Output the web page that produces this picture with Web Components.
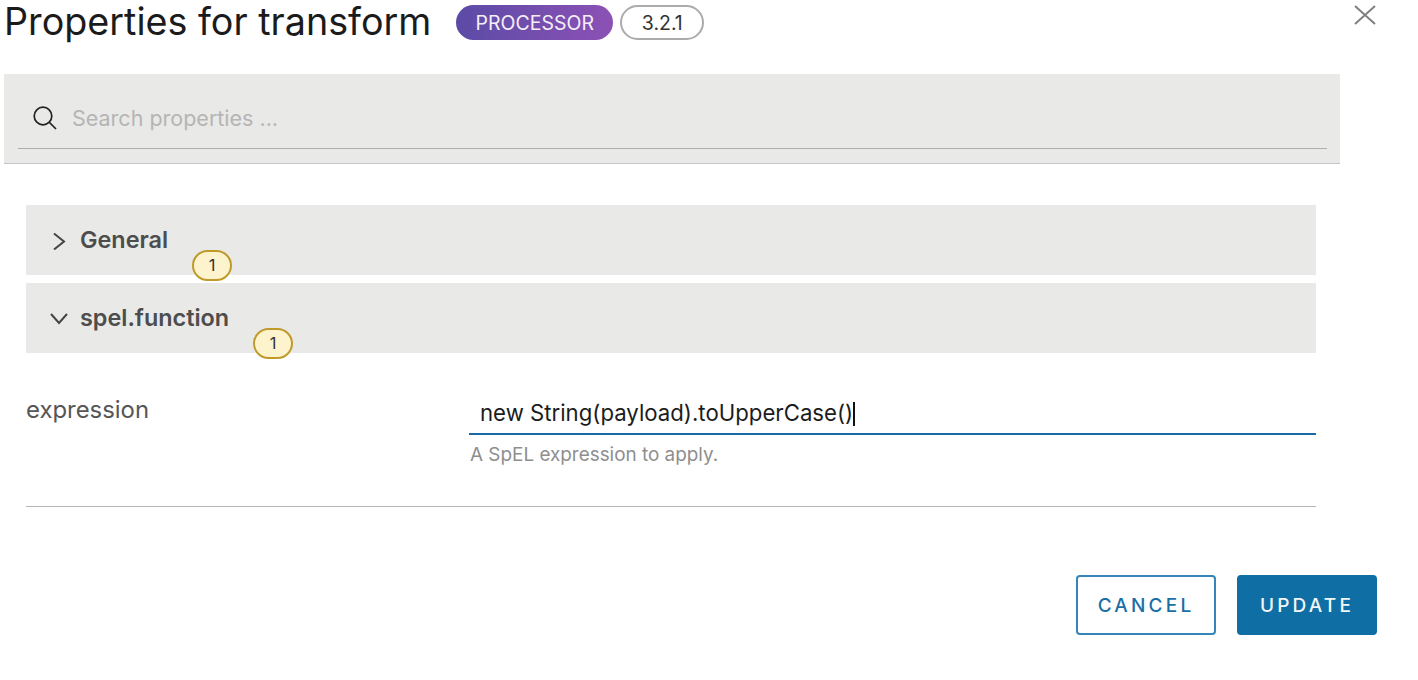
<!DOCTYPE html>
<html lang="en">
<head>
<meta charset="utf-8">
<title>Properties for transform</title>
<style>
  html, body { margin: 0; background: #fff; }
  body { font-family: "Inter", "Liberation Sans", sans-serif; overflow: hidden; }
</style>
</head>
<body>
<props-dialog>
  <dialog-header slot="header" name="Properties for transform" kind="PROCESSOR" version="3.2.1"></dialog-header>
  <search-bar slot="search" placeholder="Search properties ..."></search-bar>
  <prop-group label="General" count="1"></prop-group>
  <prop-group label="spel.function" count="1" open>
    <prop-field label="expression" value="new String(payload).toUpperCase()" hint="A SpEL expression to apply."></prop-field>
  </prop-group>
  <dialog-actions slot="actions"></dialog-actions>
</props-dialog>

<script>
class PropsDialog extends HTMLElement {
  constructor() {
    super();
    this.attachShadow({ mode: 'open' });
    this.shadowRoot.innerHTML = `
      <style>
        :host { display: block; width: 1418px; height: 680px; position: relative; box-sizing: border-box; padding: 0 0 0 4px; }
        .close { position: absolute; left: 1353px; top: 4px; width: 24px; height: 22px; display: block; }
        .groups { width: 1290px; margin: 41px 0 0 22px; display: flex; flex-direction: column; gap: 8px; }
        .end { width: 1290px; height: 1px; margin: 0 0 0 22px; background: #b4b4b4; }
      </style>
      <slot name="header"></slot>
      <svg class="close" viewBox="0 0 24 22" fill="none" stroke="#808080" stroke-width="2"><path d="M2 2 L22 20 M22 2 L2 20"/></svg>
      <slot name="search"></slot>
      <div class="groups"><slot></slot></div>
      <div class="end"></div>
      <slot name="actions"></slot>
    `;
  }
}

class DialogHeader extends HTMLElement {
  constructor() {
    super();
    this.attachShadow({ mode: 'open' });
    this.shadowRoot.innerHTML = `
      <style>
        :host { display: flex; align-items: center; height: 74px; box-sizing: border-box; padding-bottom: 29px; }
        h1 { margin: -3px 0 0; font: 400 37.7px/45px "Inter", "Liberation Sans", sans-serif; color: #1b1b1b; white-space: nowrap; }
        .kind, .ver { display: flex; align-items: center; justify-content: center; box-sizing: border-box; height: 35px; border-radius: 18px; font-size: 19.5px; }
        .kind { width: 157px; margin-left: 25px; color: #f4eef8; background: linear-gradient(90deg, #5b4ba6, #8c51b5); }
        .ver { width: 84px; margin-left: 7px; color: #333; background: #fff; border: 2px solid #ababab; }
      </style>
      <h1></h1><span class="kind"></span><span class="ver"></span>
    `;
  }
  connectedCallback() {
    this.shadowRoot.querySelector('h1').textContent = this.getAttribute('name');
    this.shadowRoot.querySelector('.kind').textContent = this.getAttribute('kind');
    this.shadowRoot.querySelector('.ver').textContent = this.getAttribute('version');
  }
}

class SearchBar extends HTMLElement {
  constructor() {
    super();
    this.attachShadow({ mode: 'open' });
    this.shadowRoot.innerHTML = `
      <style>
        :host { display: block; width: 1336px; height: 90px; box-sizing: border-box; padding: 0 13px 0 14px; background: #e9e9e8; border-bottom: 1px solid #c6c6c6; }
        .line { display: flex; align-items: center; height: 75px; box-sizing: border-box; padding: 14px 0 0 14px; border-bottom: 1px solid #aeaeae; }
        svg { width: 26px; height: 26px; flex: none; margin-top: -1px; }
        span { margin-left: 14px; font-size: 21.5px; color: #b5b5b5; }
      </style>
      <div class="line">
        <svg viewBox="0 0 26 26" fill="none" stroke="#222" stroke-width="1.7"><circle cx="11" cy="11" r="8.8"/><path d="M17.5 17.5 L24 24"/></svg>
        <span></span>
      </div>
    `;
  }
  connectedCallback() {
    this.shadowRoot.querySelector('span').textContent = this.getAttribute('placeholder');
  }
}

class PropGroup extends HTMLElement {
  constructor() {
    super();
    this.attachShadow({ mode: 'open' });
    this.shadowRoot.innerHTML = `
      <style>
        :host { display: block; }
        .head { display: flex; align-items: center; height: 70px; box-sizing: border-box; padding: 0 0 2px 22px; background: #e9e9e8; }
        svg { width: 22px; height: 22px; flex: none; }
        .label { position: relative; margin-left: 10px; font-size: 23.4px; font-weight: 600; color: #4d4d4d; }
        .count { position: absolute; left: calc(100% + 24px); top: 25px; width: 40px; height: 31px; box-sizing: border-box; display: flex; align-items: center; justify-content: center; border: 2px solid #c09a2a; border-radius: 16px; background: #fdf3cd; font-size: 16.5px; font-weight: 400; color: #333; }
      </style>
      <div class="head">
        <svg viewBox="0 0 22 22" fill="none" stroke="#444" stroke-width="2"></svg>
        <span class="label"><span class="text"></span><span class="count"></span></span>
      </div>
      <slot></slot>
    `;
  }
  connectedCallback() {
    const root = this.shadowRoot;
    root.querySelector('.text').textContent = this.getAttribute('label');
    root.querySelector('.count').textContent = this.getAttribute('count');
    root.querySelector('svg').innerHTML = this.hasAttribute('open')
      ? '<path d="M3 8 L11 17 L19 8"/>'
      : '<path d="M6 5.5 L16 13.5 L6 21.5"/>';
  }
}

class PropField extends HTMLElement {
  constructor() {
    super();
    this.attachShadow({ mode: 'open' });
    this.shadowRoot.innerHTML = `
      <style>
        :host { display: flex; height: 153px; box-sizing: border-box; padding-top: 37px; }
        .name { width: 443px; flex: none; padding-top: 1.5px; font-size: 23.9px; line-height: 36px; color: #565656; }
        .body { flex: 1; }
        .val { height: 45px; box-sizing: border-box; padding: 6px 0 0 11px; border-bottom: 2px solid #1a6aa8; font-size: 22.2px; line-height: 34px; color: #1c1c1c; white-space: nowrap; }
        .caret { display: inline-block; width: 1.5px; height: 24px; background: #111; vertical-align: -5px; }
        .hint { margin-top: 7px; padding-left: 1px; font-size: 18.9px; line-height: 26px; color: #8e8e8e; }
      </style>
      <div class="name"></div>
      <div class="body">
        <div class="val"><span class="v"></span><span class="caret"></span></div>
        <div class="hint"></div>
      </div>
    `;
  }
  connectedCallback() {
    const root = this.shadowRoot;
    root.querySelector('.name').textContent = this.getAttribute('label');
    root.querySelector('.v').textContent = this.getAttribute('value');
    root.querySelector('.hint').textContent = this.getAttribute('hint');
  }
}

class DialogActions extends HTMLElement {
  constructor() {
    super();
    this.attachShadow({ mode: 'open' });
    this.shadowRoot.innerHTML = `
      <style>
        :host { display: flex; justify-content: flex-end; gap: 21px; width: 1373px; margin-top: 68px; }
        button { width: 140px; height: 60px; box-sizing: border-box; border-radius: 4px; border: 2px solid #3585b8; font: 500 19px "Inter", "Liberation Sans", sans-serif; letter-spacing: 3.2px; padding: 0; }
        .ghost { background: #fff; color: #1a6fa5; }
        .solid { background: #0f6ea3; border-color: #0f6ea3; color: #f2f6f9; }
      </style>
      <button class="ghost">CANCEL</button>
      <button class="solid">UPDATE</button>
    `;
  }
}

customElements.define('props-dialog', PropsDialog);
customElements.define('dialog-header', DialogHeader);
customElements.define('search-bar', SearchBar);
customElements.define('prop-group', PropGroup);
customElements.define('prop-field', PropField);
customElements.define('dialog-actions', DialogActions);
</script>
</body>
</html>
